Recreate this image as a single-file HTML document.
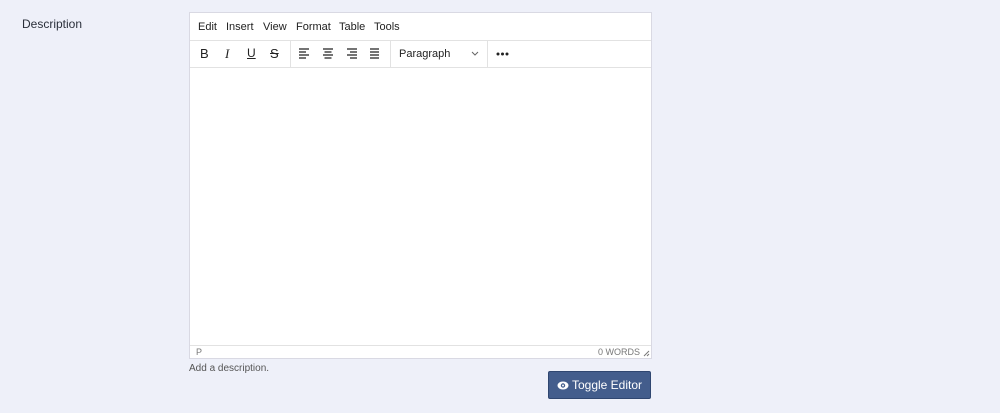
<!DOCTYPE html>
<html><head><style>
body{margin:0;width:1000px;height:413px;background:#eef0f9;font-family:"Liberation Sans",sans-serif;position:relative;overflow:hidden}
.lbl{position:absolute;left:22px;top:17px;font-size:12px;color:#2a2f3a}
.ed{position:absolute;left:189px;top:12px;width:461px;height:345px;border:1px solid #d9d9e3;background:#fff}
.menu{height:27px;border-bottom:1px solid #e2e2e2;font-size:11px;color:#222}
.menu span{position:absolute;top:8px}
.tb{position:absolute;top:28px;left:0;right:0;height:26px;border-bottom:1px solid #e2e2e2}
.sep{position:absolute;top:0;width:1px;height:26px;background:#e2e2e2}
.ic{position:absolute;top:5px;font-size:13px;color:#222}
.st{position:absolute;bottom:0;left:0;right:0;height:12px;border-top:1px solid #e2e2e2;font-size:9px;color:#777}
.btn{position:absolute;left:548px;top:371px;width:103px;height:28px;background:#435d8c;border:1px solid #2f4670;border-radius:2px;box-sizing:border-box;color:#fff;font-size:12px;line-height:26px;text-align:center}
</style></head><body>
<div class="lbl">Description</div>
<div class="ed">
<div class="menu"><span style="left:8px">Edit</span><span style="left:36px">Insert</span><span style="left:73px">View</span><span style="left:106px">Format</span><span style="left:149px">Table</span><span style="left:184px">Tools</span></div>
<div class="tb">
<span class="ic" style="left:10px">B</span>
<span class="ic" style="left:35px;font-family:'Liberation Serif';font-style:italic">I</span>
<span class="ic" style="left:57px;text-decoration:underline;font-size:12px;top:5px">U</span>
<span class="ic" style="left:80px;text-decoration:line-through">S</span>
<div class="sep" style="left:100px"></div>
<svg style="position:absolute;left:109px;top:7px" width="80" height="12" stroke="#222" stroke-width="1.2">
<path d="M0 1h10M0 4h7M0 7h10M0 10h7"/>
<path d="M24 1h10M25.5 4h7M24 7h10M25.5 10h7"/>
<path d="M48 1h10M51 4h7M48 7h10M51 10h7"/>
<path d="M71 1h11M71 4h11M71 7h11M71 10h11"/>
</svg>
<div class="sep" style="left:200px"></div>
<span class="ic" style="left:209px;top:7px;font-size:11px">Paragraph</span>
<svg style="position:absolute;left:281px;top:10px" width="8" height="6"><path d="M1 1l3 3 3-3" stroke="#666" fill="none"/></svg>
<div class="sep" style="left:297px"></div>
<svg style="position:absolute;left:306px;top:11px" width="14" height="4" fill="#222"><circle cx="2" cy="2" r="1.5"/><circle cx="6.5" cy="2" r="1.5"/><circle cx="11" cy="2" r="1.5"/></svg>
</div>
<div class="st"><span style="position:absolute;left:6px;top:1px">P</span><span style="position:absolute;right:11px;top:1px">0 WORDS</span><svg style="position:absolute;right:1px;bottom:1px" width="7" height="7" stroke="#777"><path d="M6 1L1 6M6 4L4 6"/></svg></div>
</div>
<div style="position:absolute;left:189px;top:363px;font-size:10px;color:#555">Add a description.</div>
<div class="btn"><svg width="12" height="9" style="vertical-align:-1px;margin-right:3px"><ellipse cx="6" cy="4.5" rx="5.5" ry="4" fill="#fff"/><circle cx="6" cy="4.5" r="2.2" fill="#435d8c"/><circle cx="6" cy="4.5" r="1" fill="#fff"/></svg>Toggle Editor</div>
</body></html>
